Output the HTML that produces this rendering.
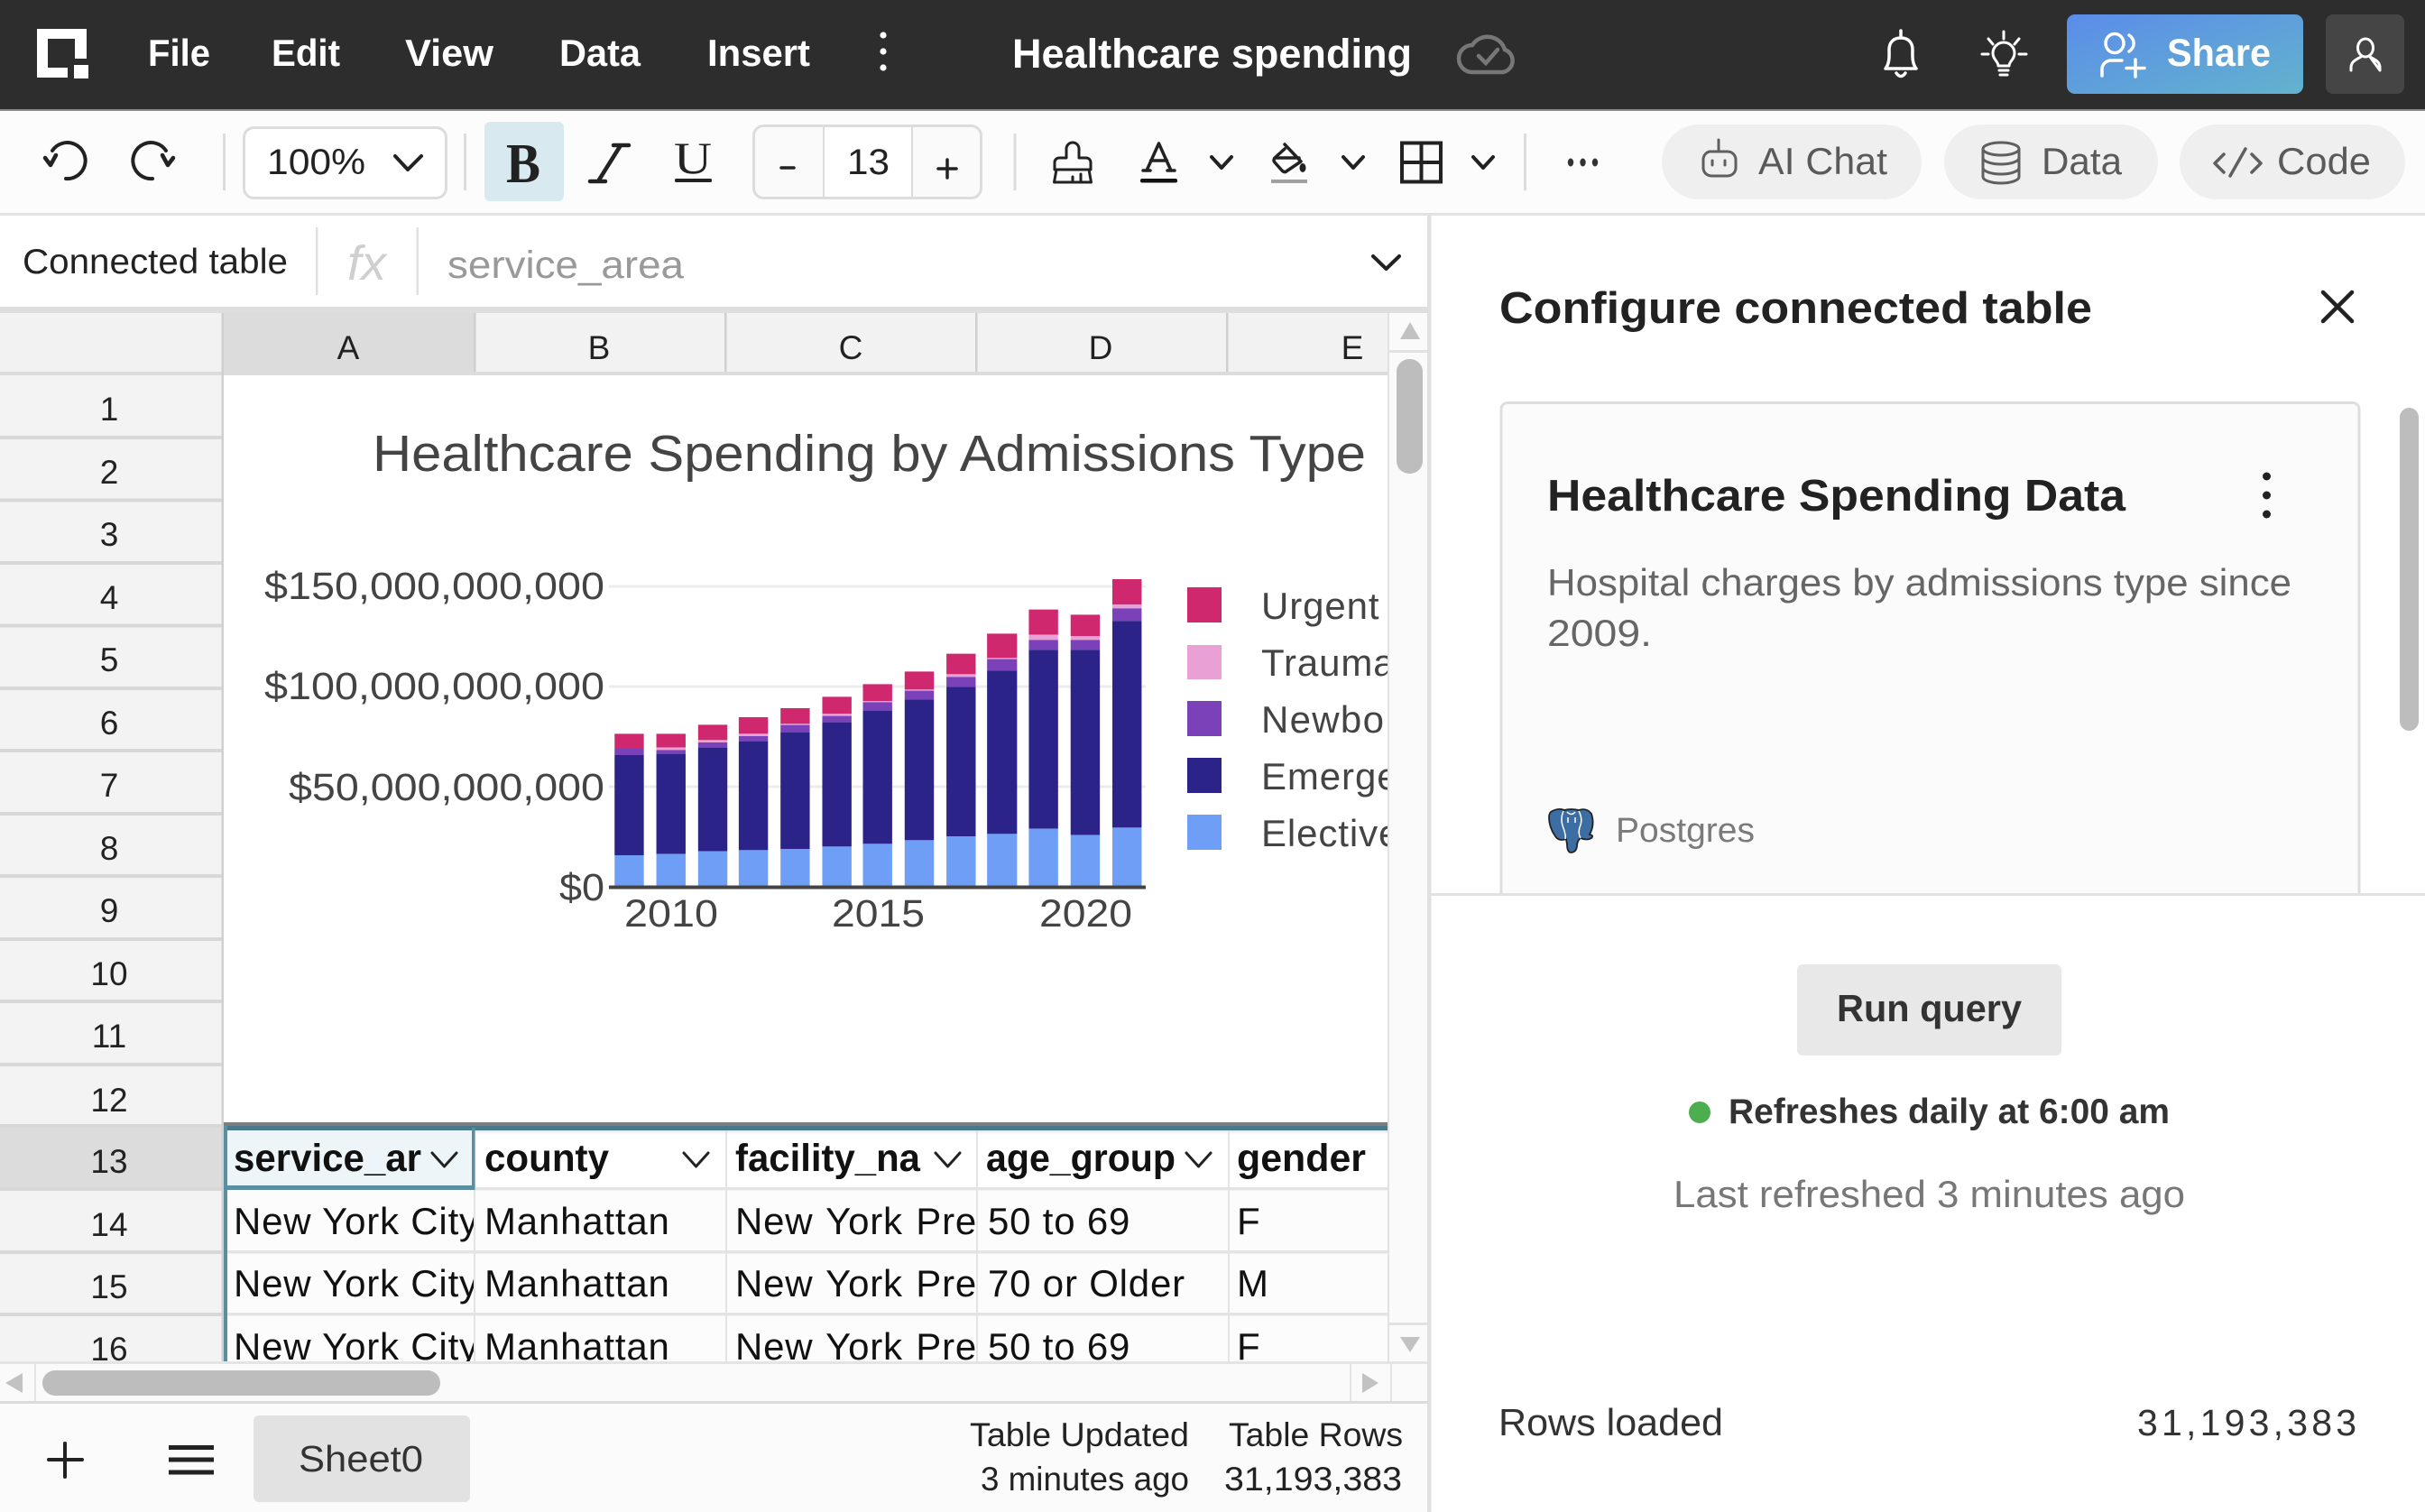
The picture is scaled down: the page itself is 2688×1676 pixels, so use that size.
<!DOCTYPE html>
<html lang="en">
<head>
<meta charset="utf-8">
<title>Healthcare spending</title>
<style>
html,body{margin:0;padding:0;width:2688px;height:1676px;overflow:hidden;background:#fff}
svg{display:block}
text{font-family:"Liberation Sans",sans-serif;fill:#222}
.m{font-size:42px;font-weight:700;fill:#fff}
.h{font-size:37px;fill:#222}
.tb{font-size:40px;fill:#222}
.pill{font-size:42px;fill:#5a5a5a}
.c{font-size:42px;fill:#111;letter-spacing:.8px}
.ch{font-size:43px;font-weight:700;fill:#111}
.f{font-size:37px;fill:#222}
.ax{font-size:43px;fill:#444}
.lg{font-size:42px;fill:#444;letter-spacing:.9px}
.ic{fill:none;stroke:#222;stroke-width:4;stroke-linecap:round;stroke-linejoin:round}
.w{fill:none;stroke:#fff;stroke-width:3.5;stroke-linecap:round;stroke-linejoin:round}
.g{fill:none;stroke:#5f5f5f;stroke-width:3;stroke-linecap:round;stroke-linejoin:round}
</style>
</head>
<body>
<svg xmlns="http://www.w3.org/2000/svg" width="2688" height="1676" viewBox="0 0 2688 1676">
<defs>
<linearGradient id="sh" x1="0" y1="0" x2="1" y2="1"><stop offset="0" stop-color="#5b8ce9"/><stop offset="1" stop-color="#62b3cd"/></linearGradient>
<linearGradient id="hs" x1="0" y1="0" x2="0" y2="1"><stop offset="0" stop-color="#e6e6e6"/><stop offset=".3" stop-color="#fff"/></linearGradient>
<clipPath id="cA"><rect x="252" y="1320" width="273" height="189"/></clipPath>
<clipPath id="cB"><rect x="527" y="1320" width="277" height="189"/></clipPath>
<clipPath id="cC"><rect x="806" y="1320" width="276" height="189"/></clipPath>
<clipPath id="cD"><rect x="1084" y="1320" width="277" height="189"/></clipPath>
<clipPath id="cE"><rect x="1363" y="1320" width="175" height="189"/></clipPath>
<clipPath id="cL"><rect x="1390" y="640" width="148" height="320"/></clipPath>
<clipPath id="cR"><rect x="0" y="415" width="245" height="1094"/></clipPath>
</defs>

<!-- Top bar -->
<rect width="2688" height="122" fill="#2d2d2d"/>
<rect y="121" width="2688" height="2" fill="#8a8a8a"/>
<path d="M41 32H96V65H83V43H53V75H75V86H41Z M82 72H98V87H82Z" fill="#fff"/>
<text class="m" x="164" y="73" textLength="69" lengthAdjust="spacingAndGlyphs">File</text>
<text class="m" x="301" y="73" textLength="76" lengthAdjust="spacingAndGlyphs">Edit</text>
<text class="m" x="449" y="73" textLength="98" lengthAdjust="spacingAndGlyphs">View</text>
<text class="m" x="620" y="73" textLength="90" lengthAdjust="spacingAndGlyphs">Data</text>
<text class="m" x="784" y="73" textLength="114" lengthAdjust="spacingAndGlyphs">Insert</text>
<circle cx="979" cy="39" r="3.6" fill="#fff"/><circle cx="979" cy="57" r="3.6" fill="#fff"/><circle cx="979" cy="75" r="3.6" fill="#fff"/>
<text x="1122" y="75" textLength="443" lengthAdjust="spacingAndGlyphs" style="font-size:45px;font-weight:700;fill:#fff">Healthcare spending</text>
<path d="M1632 80H1666A13 13 0 0 0 1668 55A20 20 0 0 0 1632 50A15 15 0 0 0 1632 80Z" fill="none" stroke="#777" stroke-width="4.500"/>
<path d="M1639 62L1647 70L1660 55" fill="none" stroke="#777" stroke-width="4.500" stroke-linecap="round"/>
<path class="w" d="M2107 34V42M2090 76C2095 70 2094 60 2094 55C2094 46 2100 42 2107 42C2114 42 2120 46 2120 55C2120 60 2119 70 2124 76Z M2102 81Q2107 88 2112 81"/>
<path class="w" d="M2221 35V43M2197 60H2204M2238 60H2246M2204 43L2209 49M2238 43L2233 49M2215 73C2215 68 2209 66 2209 59A12 12 0 0 1 2233 59C2233 66 2227 68 2227 73ZM2216 78H2226M2217 83H2225" style="stroke-width:3"/>
<rect x="2291" y="16" width="262" height="88" rx="9" fill="url(#sh)"/>
<ellipse cx="2344" cy="48" rx="10" ry="10.5" class="w"/>
<path class="w" d="M2360 39A10.5 10.5 0 0 1 2360 57M2330 84V76A10 10 0 0 1 2340 67H2352M2367 66V85M2357 75.500H2377"/>
<text x="2402" y="73" textLength="115" lengthAdjust="spacingAndGlyphs" style="font-size:43px;font-weight:700;fill:#fff">Share</text>
<rect x="2578" y="16" width="87" height="88" rx="8" fill="#454545"/>
<ellipse cx="2622" cy="53" rx="8.500" ry="10" class="w" style="stroke-width:3"/>
<path class="w" style="stroke-width:3" d="M2606 78V75C2606 68 2612 66 2617 63M2627 63C2632 66 2638 68 2638 75V78Z"/>

<!-- Toolbar -->
<rect y="123" width="2688" height="113" fill="#fcfcfc"/>
<rect y="236" width="2688" height="3" fill="#e2e2e2"/>
<path class="ic" d="M73 198A20 20 0 1 0 58 167"/>
<path class="ic" style="stroke-width:4.500" d="M50 175L56 183L62 172"/>
<path class="ic" d="M169 198A20 20 0 1 1 184 167"/>
<path class="ic" style="stroke-width:4.500" d="M192 175L186 183L180 172"/>
<rect x="247" y="148" width="3" height="63" fill="#dcdcdc"/>
<rect x="270.500" y="141.500" width="224" height="78" rx="11" fill="#fff" stroke="#dcdcdc" stroke-width="3"/>
<text class="tb" x="296" y="193" textLength="109" lengthAdjust="spacingAndGlyphs">100%</text>
<path class="ic" d="M438 173L452 188L467 173"/>
<rect x="514" y="148" width="3" height="63" fill="#dcdcdc"/>
<rect x="537" y="135" width="88" height="88" rx="6" fill="#d8eaf0"/>
<text x="561" y="202" textLength="38" lengthAdjust="spacingAndGlyphs" style="font-family:'Liberation Serif',serif;font-size:62px;font-weight:700;fill:#222">B</text>
<path class="ic" style="stroke-width:4.500" d="M688 161L663 201M680 161H697M654 201H671"/>
<text x="747" y="192" textLength="42" lengthAdjust="spacingAndGlyphs" style="font-family:'Liberation Serif',serif;font-size:50px;fill:#222">U</text>
<rect x="748" y="198" width="41" height="4" rx="1.500" fill="#222"/>
<rect x="835.500" y="139.500" width="252" height="80" rx="11" fill="#fafafa" stroke="#dcdcdc" stroke-width="3"/>
<rect x="913" y="141" width="98" height="77" fill="#fff"/>
<rect x="912" y="141" width="2" height="77" fill="#dcdcdc"/><rect x="1010" y="141" width="2" height="77" fill="#dcdcdc"/>
<path class="ic" d="M866 186H880M1040 187H1060M1050 177V197" style="stroke-width:3.500"/>
<text class="tb" x="939" y="193" textLength="47" lengthAdjust="spacingAndGlyphs">13</text>
<rect x="1123.500" y="148" width="3" height="63" fill="#dcdcdc"/>
<path class="ic" style="stroke-width:3" d="M1182 175V165A7 7 0 0 1 1196 165V175H1204A5 5 0 0 1 1209 180V188H1169V180A5 5 0 0 1 1174 175ZM1171 188L1168.500 202H1209.500L1207 188M1189 196V202M1198 193V202"/>
<path class="ic" style="stroke-width:3.500" d="M1271 189L1284.500 159L1298 189M1275.500 178H1293.500M1267 189H1275M1294 189H1302"/>
<rect x="1264" y="198" width="41" height="4.500" rx="2" fill="#111"/>
<path class="ic" d="M1343 174L1354 186L1365 174M1489 174L1500 186L1511 174M1633 174L1644 186L1655 174"/>
<path class="ic" style="stroke-width:3.500" d="M1424 160L1442 179L1425 190.500Q1423 191 1421 189L1413 180Q1411 178 1413 175L1424 165M1414 175H1440"/>
<ellipse cx="1444" cy="186" rx="3.500" ry="5" fill="#222"/>
<rect x="1409" y="199" width="40" height="4" fill="#a0a0a0"/>
<path class="ic" d="M1554 158.500H1597V201.500H1554ZM1575.500 158.500V201.500M1554 180H1597" style="stroke-linejoin:miter"/>
<rect x="1689" y="148" width="3" height="63" fill="#dcdcdc"/>
<ellipse cx="1741" cy="180" rx="3.200" ry="4.500" fill="#333"/><ellipse cx="1754.500" cy="180" rx="3.200" ry="4.500" fill="#333"/><ellipse cx="1768" cy="180" rx="3.200" ry="4.500" fill="#333"/>

<rect x="1842" y="138" width="288" height="83" rx="41.500" fill="#efefef"/>
<path class="g" d="M1905 155V168M1895 168H1915A9 9 0 0 1 1924 177V186A9 9 0 0 1 1915 195H1897A9 9 0 0 1 1888 186V177A9 9 0 0 1 1895 168ZM1898 178V183M1912 178V183"/>
<text class="pill" x="1949" y="193" textLength="143" lengthAdjust="spacingAndGlyphs">AI Chat</text>
<rect x="2155" y="138" width="237" height="83" rx="41.500" fill="#efefef"/>
<path class="g" d="M2198 165A20 7 0 0 1 2238 165A20 7 0 0 1 2198 165ZM2198 165V196A20 7 0 0 0 2238 196V165M2198 175A20 7 0 0 0 2238 175M2198 186A20 7 0 0 0 2238 186"/>
<text class="pill" x="2263" y="193" textLength="89" lengthAdjust="spacingAndGlyphs">Data</text>
<rect x="2416" y="138" width="250" height="83" rx="41.500" fill="#efefef"/>
<path class="g" style="stroke-width:3.500" d="M2465 171L2455 181L2465 191M2489 165L2472 195M2496 171L2506 181L2496 191"/>
<text class="pill" x="2524" y="193" textLength="104" lengthAdjust="spacingAndGlyphs">Code</text>

<!-- Formula bar -->
<text x="25" y="303" textLength="294" lengthAdjust="spacingAndGlyphs" style="font-size:39px;fill:#222">Connected table</text>
<rect x="350" y="252" width="2.500" height="75" fill="#e0e0e0"/>
<rect x="461.500" y="252" width="2.500" height="75" fill="#e0e0e0"/>
<text x="385" y="310" textLength="43" lengthAdjust="spacingAndGlyphs" style="font-size:54px;font-style:italic;fill:#cfcfcf">fx</text>
<text x="496" y="308" textLength="262" lengthAdjust="spacingAndGlyphs" style="font-size:43px;fill:#999">service_area</text>
<path class="ic" d="M1522 284L1536.500 298L1551 284"/>

<!-- Column headers -->
<rect y="340" width="1582" height="7" fill="#dedede"/>
<rect y="347" width="1539" height="65" fill="#f2f2f2"/>
<rect x="247" y="347" width="278" height="65" fill="#dcdcdc"/>
<rect y="412" width="1539" height="4" fill="#dcdcdc"/>
<rect x="245.500" y="347" width="2.500" height="69" fill="#cfcfcf"/>
<rect x="525" y="347" width="2.500" height="65" fill="#cfcfcf"/>
<rect x="803" y="347" width="2.500" height="65" fill="#cfcfcf"/>
<rect x="1081" y="347" width="2.500" height="65" fill="#cfcfcf"/>
<rect x="1359" y="347" width="2.500" height="65" fill="#cfcfcf"/>
<text class="h" x="386" y="398" text-anchor="middle">A</text>
<text class="h" x="664" y="398" text-anchor="middle">B</text>
<text class="h" x="943" y="398" text-anchor="middle">C</text>
<text class="h" x="1220" y="398" text-anchor="middle">D</text>
<text class="h" x="1499" y="398" text-anchor="middle">E</text>

<!-- Row headers -->
<rect y="416" width="246" height="1093" fill="#f3f3f3"/>
<rect y="1248" width="246" height="70" fill="#dcdcdc"/>
<g fill="#d8d8d8">
<rect y="483" width="246" height="4"/><rect y="552.500" width="246" height="4"/><rect y="622" width="246" height="4"/><rect y="691.500" width="246" height="4"/><rect y="761" width="246" height="4"/><rect y="830" width="246" height="4"/><rect y="900" width="246" height="4"/><rect y="969" width="246" height="4"/><rect y="1039" width="246" height="4"/><rect y="1108" width="246" height="4"/><rect y="1178" width="246" height="4"/><rect y="1246" width="246" height="4"/><rect y="1316" width="246" height="4"/><rect y="1386" width="246" height="4"/><rect y="1455" width="246" height="4"/>
</g>
<rect x="245.500" y="416" width="2.500" height="1093" fill="#d0d0d0"/>
<g clip-path="url(#cR)">
<text class="h" x="121" y="466" text-anchor="middle">1</text>
<text class="h" x="121" y="536" text-anchor="middle">2</text>
<text class="h" x="121" y="605" text-anchor="middle">3</text>
<text class="h" x="121" y="675" text-anchor="middle">4</text>
<text class="h" x="121" y="744" text-anchor="middle">5</text>
<text class="h" x="121" y="814" text-anchor="middle">6</text>
<text class="h" x="121" y="883" text-anchor="middle">7</text>
<text class="h" x="121" y="953" text-anchor="middle">8</text>
<text class="h" x="121" y="1022" text-anchor="middle">9</text>
<text class="h" x="121" y="1092" text-anchor="middle">10</text>
<text class="h" x="121" y="1161" text-anchor="middle">11</text>
<text class="h" x="121" y="1232" text-anchor="middle">12</text>
<text class="h" x="121" y="1300" text-anchor="middle">13</text>
<text class="h" x="121" y="1370" text-anchor="middle">14</text>
<text class="h" x="121" y="1439" text-anchor="middle">15</text>
<text class="h" x="121" y="1508" text-anchor="middle">16</text>
</g>

<!-- Chart -->
<text x="413" y="522" textLength="1101" lengthAdjust="spacingAndGlyphs" style="font-size:57px;fill:#444">Healthcare Spending by Admissions Type</text>
<rect x="675" y="648.500" width="595" height="3" fill="#ececec"/>
<rect x="675" y="759.500" width="595" height="3" fill="#ececec"/>
<rect x="675" y="870.500" width="595" height="3" fill="#ececec"/>
<g transform="translate(640,620) scale(0.42088,0.33333)">
<path fill="#d0286f" d="M98 580h77v50h-77zM208 580h77v46h-77zM318 550h77v51h-77zM425 525h77v55h-77zM535 495h77v52h-77zM645 457h77v56h-77zM752 415h77v56h-77zM862 373h77v60h-77zM972 314h77v68h-77zM1079 247h79v81h-79zM1189 167h77v84h-77zM1299 184h77v71h-77zM1409 66h77v84h-77z"/>
<path fill="#e9a1d5" d="M208 626h77v8h-77zM318 601h77v8h-77zM425 580h77v8h-77zM535 547h77v4h-77zM645 513h77v8h-77zM752 471h77v4h-77zM862 433h77v4h-77zM972 382h77v9h-77zM1079 328h79v4h-79zM1189 251h77v17h-77zM1299 255h77v13h-77zM1409 150h77v13h-77z"/>
<path fill="#7a41b8" d="M98 630h77v21h-77zM208 634h77v13h-77zM318 609h77v17h-77zM425 588h77v17h-77zM535 551h77v25h-77zM645 521h77v21h-77zM752 475h77v29h-77zM862 437h77v29h-77zM972 391h77v33h-77zM1079 332h79v38h-79zM1189 268h77v33h-77zM1299 268h77v33h-77zM1409 163h77v42h-77z"/>
<path fill="#2b2388" d="M98 651h77v333h-77zM208 647h77v333h-77zM318 626h77v345h-77zM425 605h77v362h-77zM535 576h77v387h-77zM645 542h77v413h-77zM752 504h77v442h-77zM862 466h77v468h-77zM972 424h77v497h-77zM1079 370h79v543h-79zM1189 301h77v595h-77zM1299 301h77v616h-77zM1409 205h77v687h-77z"/>
<path fill="#6e9ef6" d="M98 984h77v104h-77zM208 980h77v108h-77zM318 971h77v117h-77zM425 967h77v121h-77zM535 963h77v125h-77zM645 955h77v133h-77zM752 946h77v142h-77zM862 934h77v154h-77zM972 921h77v167h-77zM1079 913h79v175h-79zM1189 896h77v192h-77zM1299 917h77v171h-77zM1409 892h77v196h-77z"/>
</g>
<rect x="675" y="981.500" width="595" height="4" fill="#444"/>
<text class="ax" x="293" y="664" textLength="377" lengthAdjust="spacingAndGlyphs">$150,000,000,000</text>
<text class="ax" x="293" y="775" textLength="377" lengthAdjust="spacingAndGlyphs">$100,000,000,000</text>
<text class="ax" x="320" y="887" textLength="350" lengthAdjust="spacingAndGlyphs">$50,000,000,000</text>
<text class="ax" x="620" y="998" textLength="50" lengthAdjust="spacingAndGlyphs">$0</text>
<text class="ax" x="692" y="1027" textLength="104" lengthAdjust="spacingAndGlyphs">2010</text>
<text class="ax" x="922" y="1027" textLength="103" lengthAdjust="spacingAndGlyphs">2015</text>
<text class="ax" x="1152" y="1027" textLength="103" lengthAdjust="spacingAndGlyphs">2020</text>
<rect x="1316" y="651" width="38" height="39" fill="#d0286f"/>
<rect x="1316" y="715" width="38" height="38" fill="#e9a1d5"/>
<rect x="1316" y="777" width="38" height="39" fill="#7a41b8"/>
<rect x="1316" y="840" width="38" height="39" fill="#2b2388"/>
<rect x="1316" y="903" width="38" height="39" fill="#6e9ef6"/>
<g clip-path="url(#cL)">
<text class="lg" x="1398" y="686">Urgent</text>
<text class="lg" x="1398" y="749">Trauma</text>
<text class="lg" x="1398" y="812" style="letter-spacing:1.3px">Newborn</text>
<text class="lg" x="1398" y="875">Emergency</text>
<text class="lg" x="1398" y="938">Elective</text>
</g>

<!-- Table -->
<rect x="248" y="1244" width="1290" height="4" fill="#7d7d7d"/>
<rect x="248" y="1248" width="1290" height="5" fill="#487a8c"/>
<rect x="252" y="1253" width="1286" height="66" fill="#fff"/>
<rect x="252" y="1253" width="1286" height="14" fill="url(#hs)"/>
<rect x="252" y="1320" width="1286" height="189" fill="#fcfcfc"/>
<rect x="252" y="1253" width="273" height="61" fill="#edf5f8"/>
<g fill="#e4e4e4">
<rect x="527" y="1316" width="1011" height="3.500"/>
<rect x="252" y="1386" width="1286" height="3.500"/>
<rect x="252" y="1455" width="1286" height="3.500"/>
<rect x="525" y="1253" width="2" height="256"/>
<rect x="804" y="1253" width="2" height="256"/>
<rect x="1082" y="1253" width="2" height="256"/>
<rect x="1361" y="1253" width="2" height="256"/>
</g>
<rect x="248" y="1248" width="4" height="261" fill="#5a8fa3"/>
<rect x="523" y="1250" width="3.500" height="69" fill="#5a8fa3"/>
<rect x="248" y="1314" width="278" height="5" fill="#5a8fa3"/>
<text class="ch" x="259" y="1298" textLength="208" lengthAdjust="spacingAndGlyphs">service_ar</text>
<text class="ch" x="537" y="1298" textLength="138" lengthAdjust="spacingAndGlyphs">county</text>
<text class="ch" x="815" y="1298" textLength="205" lengthAdjust="spacingAndGlyphs">facility_na</text>
<text class="ch" x="1093" y="1298" textLength="210" lengthAdjust="spacingAndGlyphs">age_group</text>
<text class="ch" x="1371" y="1298" textLength="143" lengthAdjust="spacingAndGlyphs">gender</text>
<path fill="none" stroke="#222" stroke-width="3" stroke-linecap="round" stroke-linejoin="round" d="M479 1278L492.500 1293L506 1278M758 1278L771.500 1293L785 1278M1037 1278L1050.500 1293L1064 1278M1315 1278L1328.500 1293L1342 1278"/>
<g clip-path="url(#cA)">
<text class="c" x="259" y="1368">New York City</text>
<text class="c" x="259" y="1437">New York City</text>
<text class="c" x="259" y="1507">New York City</text>
</g>
<g clip-path="url(#cB)">
<text class="c" x="537" y="1368">Manhattan</text>
<text class="c" x="537" y="1437">Manhattan</text>
<text class="c" x="537" y="1507">Manhattan</text>
</g>
<g clip-path="url(#cC)">
<text class="c" x="815" y="1368" style="word-spacing:2px">New York Pre</text>
<text class="c" x="815" y="1437" style="word-spacing:2px">New York Pre</text>
<text class="c" x="815" y="1507" style="word-spacing:2px">New York Pre</text>
</g>
<g clip-path="url(#cD)">
<text class="c" x="1095" y="1368">50 to 69</text>
<text class="c" x="1095" y="1437">70 or Older</text>
<text class="c" x="1095" y="1507">50 to 69</text>
</g>
<g clip-path="url(#cE)">
<text class="c" x="1371" y="1368">F</text>
<text class="c" x="1371" y="1437">M</text>
<text class="c" x="1371" y="1507">F</text>
</g>

<!-- Vertical scrollbar -->
<rect x="1538" y="347" width="44" height="1162" fill="#fafafa"/>
<rect x="1538" y="347" width="2" height="1162" fill="#e2e2e2"/>
<rect x="1540" y="388" width="42" height="3" fill="#e2e2e2"/>
<rect x="1540" y="1466" width="42" height="3" fill="#e2e2e2"/>
<path d="M1563 357L1574 376H1552Z" fill="#c2c2c2"/>
<path d="M1563 1499L1574 1482H1552Z" fill="#c2c2c2"/>
<rect x="1548" y="398" width="29" height="127" rx="14" fill="#bdbdbd"/>

<!-- Horizontal scrollbar -->
<rect y="1509" width="1582" height="44" fill="#fafafa"/>
<rect y="1509" width="1582" height="3" fill="#e4e4e4"/>
<rect y="1553" width="1582" height="3" fill="#dcdcdc"/>
<rect x="38" y="1512" width="2" height="41" fill="#e4e4e4"/>
<rect x="1496" y="1512" width="2" height="41" fill="#e4e4e4"/>
<rect x="1541" y="1512" width="2" height="41" fill="#e4e4e4"/>
<path d="M6 1533L25 1522V1544Z" fill="#c2c2c2"/>
<path d="M1528 1533L1510 1522V1544Z" fill="#c2c2c2"/>
<rect x="47" y="1519" width="441" height="28" rx="14" fill="#bdbdbd"/>

<!-- Bottom bar -->
<rect y="1556" width="1582" height="120" fill="#fbfbfb"/>
<path d="M72 1600V1637M54 1618H91" stroke="#222" stroke-width="4" stroke-linecap="round"/>
<rect x="187" y="1602" width="50" height="5" fill="#222"/>
<rect x="187" y="1615.500" width="50" height="5" fill="#222"/>
<rect x="187" y="1629.500" width="50" height="5" fill="#222"/>
<rect x="281" y="1569" width="240" height="96" rx="6" fill="#e2e2e2"/>
<text x="331" y="1631" textLength="138" lengthAdjust="spacingAndGlyphs" style="font-size:41px;fill:#333">Sheet0</text>
<text class="f" x="1075" y="1603" textLength="243" lengthAdjust="spacingAndGlyphs">Table Updated</text>
<text class="f" x="1087" y="1652" textLength="231" lengthAdjust="spacingAndGlyphs">3 minutes ago</text>
<text class="f" x="1362" y="1603" textLength="193" lengthAdjust="spacingAndGlyphs">Table Rows</text>
<text class="f" x="1357" y="1652" textLength="197" lengthAdjust="spacingAndGlyphs">31,193,383</text>

<!-- Splitter -->
<rect x="1582" y="239" width="4.500" height="1437" fill="#e0e0e0"/>

<!-- Right panel -->
<text x="1662" y="358" textLength="657" lengthAdjust="spacingAndGlyphs" style="font-size:49px;font-weight:700;fill:#222">Configure connected table</text>
<path d="M2575 324L2607 356M2607 324L2575 356" stroke="#222" stroke-width="4.500" stroke-linecap="round"/>
<path d="M1664 991V453A7 7 0 0 1 1671 446.500H2608A7 7 0 0 1 2615 453V991" fill="#fbfbfb" stroke="#dedede" stroke-width="3"/>
<text x="1715" y="566" textLength="641" lengthAdjust="spacingAndGlyphs" style="font-size:49px;font-weight:700;fill:#222">Healthcare Spending Data</text>
<circle cx="2512.500" cy="528" r="4.500" fill="#222"/><circle cx="2512.500" cy="549" r="4.500" fill="#222"/><circle cx="2512.500" cy="570" r="4.500" fill="#222"/>
<text x="1715" y="660" textLength="825" lengthAdjust="spacingAndGlyphs" style="font-size:42px;fill:#666">Hospital charges by admissions type since</text>
<text x="1715" y="716" textLength="116" lengthAdjust="spacingAndGlyphs" style="font-size:42px;fill:#666">2009.</text>
<path d="M1719 900Q1727 895 1734 898Q1741 896 1750 898Q1759 895 1764 902Q1768 914 1762 925Q1767 926 1764 929Q1759 932 1752 929Q1748 932 1748 938Q1747 945 1741 945Q1737 944 1737 936L1736 930Q1728 933 1724 927Q1717 917 1717 906Q1717 902 1719 900Z" fill="#3c6ea4" stroke="#222" stroke-width="1.800"/>
<path d="M1733 899Q1729 908 1733 918Q1736 926 1735 930M1750 899Q1755 908 1751 917Q1749 924 1752 929M1737 900Q1742 905 1746 900M1738 906L1738 912M1746 906L1746 912" fill="none" stroke="#fff" stroke-width="1.500"/>
<text x="1791" y="933" textLength="154" lengthAdjust="spacingAndGlyphs" style="font-size:38px;fill:#7a7a7a">Postgres</text>
<rect x="2660" y="452" width="21" height="358" rx="10.500" fill="#bdbdbd"/>

<rect x="1586.500" y="991" width="1102" height="685" fill="#fff"/>
<rect x="1586.500" y="990" width="1102" height="3" fill="#e2e2e2"/>
<rect x="1992" y="1069" width="293" height="101" rx="6" fill="#e8e8e8"/>
<text x="2036" y="1132" textLength="205" lengthAdjust="spacingAndGlyphs" style="font-size:42px;font-weight:700;fill:#333">Run query</text>
<circle cx="1884" cy="1233" r="12" fill="#4cae4f"/>
<text x="1916" y="1245" textLength="489" lengthAdjust="spacingAndGlyphs" style="font-size:39px;font-weight:700;fill:#333">Refreshes daily at 6:00 am</text>
<text x="1855" y="1338" textLength="567" lengthAdjust="spacingAndGlyphs" style="font-size:42px;fill:#777">Last refreshed 3 minutes ago</text>
<text x="1661" y="1591" textLength="249" lengthAdjust="spacingAndGlyphs" style="font-size:42px;fill:#333">Rows loaded</text>
<text x="2369" y="1591" textLength="243" lengthAdjust="spacing" style="font-size:41px;fill:#333">31,193,383</text>
</svg>
</body>
</html>
